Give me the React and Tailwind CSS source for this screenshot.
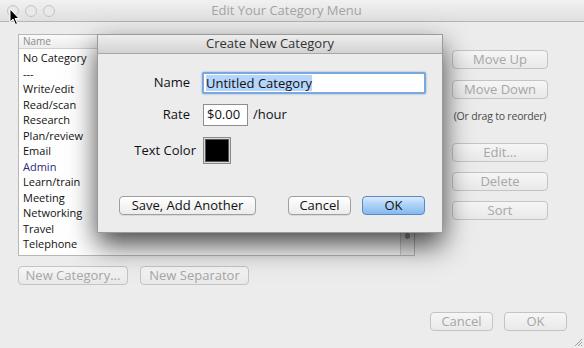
import React from 'react';

const items = [
  'No Category', '---', 'Write/edit', 'Read/scan', 'Research', 'Plan/review',
  'Email', 'Admin', 'Learn/train', 'Meeting', 'Networking', 'Travel', 'Telephone',
];

function MacButton({ children, className = '', disabled = false, primary = false }) {
  const base = 'flex items-center justify-center rounded-[4px] border text-[13px] leading-none';
  const look = primary
    ? 'border-[#5b88c2] bg-gradient-to-b from-[#d8eafc] via-[#a9cff5] to-[#84b9ef] text-[#111]'
    : disabled
      ? 'border-[#c4c4c4] bg-gradient-to-b from-[#f6f6f6] to-[#e9e9e9] text-[#a6a6a6]'
      : 'border-[#9f9f9f] bg-gradient-to-b from-[#ffffff] to-[#ececec] text-[#111] shadow-[0_1px_0_rgba(0,0,0,0.08)]';
  return <div className={`${base} ${look} ${className}`}>{children}</div>;
}

export default function App() {
  return (
    <div className="relative w-[584px] h-[348px] overflow-hidden bg-[#ececec] font-['Open_Sans','Liberation_Sans',sans-serif] text-[#111]">
      {/* title bar */}
      <div className="relative flex h-[22px] items-center border-b border-[#b5b5b5] bg-gradient-to-b from-[#f1f1f1] to-[#e0e0e0]">
        <div className="flex gap-[6px] pl-[7px]">
          <span className="h-[12px] w-[12px] rounded-full border border-[#c3c3c3] bg-[#e9e9e9]" />
          <span className="h-[12px] w-[12px] rounded-full border border-[#c3c3c3] bg-[#e9e9e9]" />
          <span className="h-[12px] w-[12px] rounded-full border border-[#c3c3c3] bg-[#e9e9e9]" />
        </div>
        <div className="flex-1 pr-[66px] text-center text-[13px] text-[#a4a4a4]">Edit Your Category Menu</div>
      </div>

      {/* cursor */}
      <svg className="absolute left-[9px] top-[8px]" width="12" height="18" viewBox="0 0 12 18">
        <path d="M1 1 L1 14 L4 11 L6.5 16.5 L8.5 15.5 L6 10.5 L10 10.5 Z" fill="#000" stroke="#fff" strokeWidth="1" />
      </svg>

      <div className="flex flex-col px-[18px] pt-[12px]">
        <div className="flex">
          {/* list */}
          <div className="relative flex h-[222px] w-[397px] flex-col border border-[#b7b7b7] bg-white">
            <div className="flex h-[14px] items-center border-b border-[#cfcfcf] bg-gradient-to-b from-[#fafafa] to-[#ececec] pl-[4px] text-[10px] text-[#8a8a8a]">Name</div>
            <div className="flex flex-col pl-[4px] pt-[1px]">
              {items.map((it) => (
                <div key={it} className={`h-[15.5px] text-[11px] leading-[15.5px] ${it === 'Admin' ? 'text-[#2a2a7a]' : 'text-[#111]'}`}>{it}</div>
              ))}
            </div>
            <div className="absolute bottom-0 right-0 top-[14px] w-[14px] border-l border-[#d0d0d0] bg-[#f0f0f0]">
              <div className="absolute bottom-[16px] left-[4px] h-[6px] w-[5px] rounded-full bg-[#9c9c9c]" />
            </div>
          </div>

          {/* right column */}
          <div className="ml-[37px] flex w-[96px] flex-col pt-[16px]">
            <MacButton disabled className="h-[19px] text-[12px]">Move Up</MacButton>
            <MacButton disabled className="mt-[11px] h-[19px] text-[12px]">Move Down</MacButton>
            <div className="mt-[10px] whitespace-nowrap text-center text-[10.5px] tracking-[-0.2px] text-[#4a4a4a]">(Or drag to reorder)</div>
            <MacButton disabled className="mt-[18px] h-[19px] text-[12px]">Edit...</MacButton>
            <MacButton disabled className="mt-[10px] h-[19px] text-[12px]">Delete</MacButton>
            <MacButton disabled className="mt-[10px] h-[19px] text-[12px]">Sort</MacButton>
          </div>
        </div>

        <div className="mt-[10px] flex gap-[12px]">
          <MacButton disabled className="h-[19px] w-[110px] text-[12px]">New Category...</MacButton>
          <MacButton disabled className="h-[19px] w-[109px] text-[12px]">New Separator</MacButton>
        </div>

        <div className="mt-[27px] flex justify-end gap-[11px]">
          <MacButton disabled className="h-[19px] w-[63px] text-[12px]">Cancel</MacButton>
          <MacButton disabled className="mr-[-1px] h-[19px] w-[63px] text-[12px]">OK</MacButton>
        </div>
      </div>

      {/* resize grip */}
      <svg className="absolute bottom-[1px] right-[1px]" width="10" height="10" viewBox="0 0 10 10">
        <path d="M9 2 L2 9 M9 5 L5 9 M9 8 L8 9" stroke="#9a9a9a" strokeWidth="1" />
      </svg>

      {/* sheet dialog */}
      <div className="absolute left-[97px] top-[34px] flex h-[199px] w-[346px] flex-col border border-[#9a9a9a] bg-[#ececec] shadow-[0_12px_26px_rgba(0,0,0,0.72)]">
        <div className="flex h-[19px] items-center justify-center border-b border-[#a8a8a8] bg-gradient-to-b from-[#eeeeee] to-[#d2d2d2] text-[13px] text-[#333]">Create New Category</div>
        <div className="flex flex-col pl-[4px] pt-[18px]">
          <div className="flex items-center">
            <div className="w-[88px] text-right text-[13px]">Name</div>
            <div className="ml-[12px] flex h-[22px] w-[224px] items-center rounded-[2px] border-2 border-[#7aa7de] bg-white pl-[2px] shadow-[0_0_2px_rgba(70,130,210,0.7)]">
              <span className="bg-[#b5d5fb] text-[13px] leading-[16px]">Untitled Category</span>
            </div>
          </div>
          <div className="mt-[10px] flex items-center">
            <div className="w-[88px] text-right text-[13px]">Rate</div>
            <div className="ml-[13px] flex h-[22px] w-[45px] items-center border border-[#8e8e8e] bg-white pl-[3px] text-[13px]">$0.00</div>
            <div className="ml-[5px] text-[13px]">/hour</div>
          </div>
          <div className="mt-[11px] flex items-center">
            <div className="w-[94px] text-right text-[13px]">Text Color</div>
            <div className="ml-[7px] flex h-[27px] w-[28px] items-center justify-center border border-[#8a8a8a] bg-[#d8d8d8]">
              <div className="h-[23px] w-[24px] border border-[#555] bg-black" />
            </div>
          </div>
          <div className="mt-[32px] flex items-center pl-[17px]">
            <MacButton className="h-[19px] w-[137px]">Save, Add Another</MacButton>
            <MacButton className="ml-[32px] h-[19px] w-[63px]">Cancel</MacButton>
            <MacButton primary className="ml-[11px] h-[19px] w-[63px]">OK</MacButton>
          </div>
        </div>
      </div>
    </div>
  );
}
